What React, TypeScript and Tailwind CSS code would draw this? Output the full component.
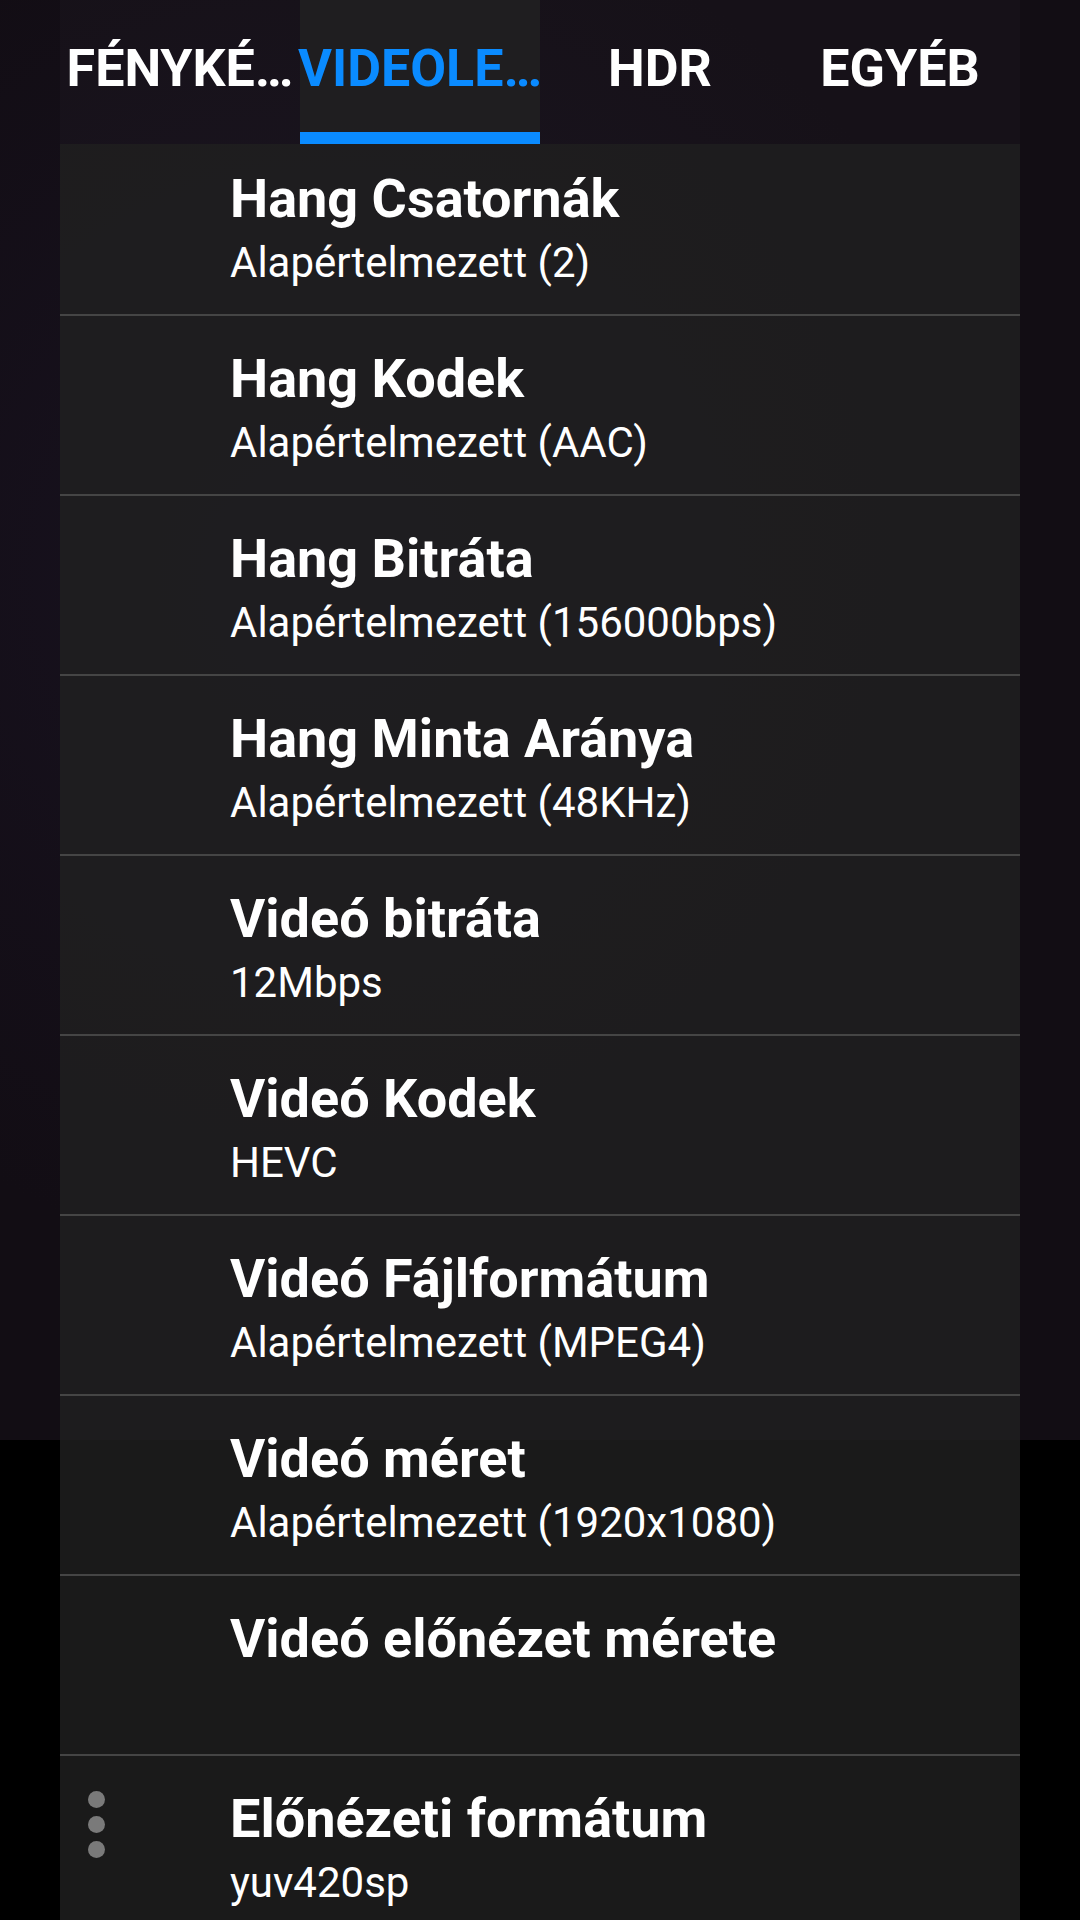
import React from "react";

const tabs = [
  { label: "FÉNYKÉ…", active: false },
  { label: "VIDEOLE…", active: true },
  { label: "HDR", active: false },
  { label: "EGYÉB", active: false },
];

const rows = [
  { title: "Hang Csatornák", value: "Alapértelmezett (2)" },
  { title: "Hang Kodek", value: "Alapértelmezett (AAC)" },
  { title: "Hang Bitráta", value: "Alapértelmezett (156000bps)" },
  { title: "Hang Minta Aránya", value: "Alapértelmezett (48KHz)" },
  { title: "Videó bitráta", value: "12Mbps" },
  { title: "Videó Kodek", value: "HEVC" },
  { title: "Videó Fájlformátum", value: "Alapértelmezett (MPEG4)" },
  { title: "Videó méret", value: "Alapértelmezett (1920x1080)" },
  { title: "Videó előnézet mérete", value: "" },
  { title: "Előnézeti formátum", value: "yuv420sp" },
];

export default function App() {
  return (
    <div className="relative w-[1080px] h-[1920px] overflow-hidden bg-black font-['Roboto',sans-serif] text-white">
      {/* camera preview behind the settings overlay */}
      <div className="absolute inset-x-0 top-0 h-[1440px] bg-[#120d14] bg-[radial-gradient(circle_at_30%_40%,#181220_0%,#120d14_60%)]" />

      <div className="relative mx-[60px] flex flex-col">
        <div className="flex h-[144px] bg-white/[0.02]">
          {tabs.map((tab) => (
            <div
              key={tab.label}
              className={`flex w-[240px] flex-col ${tab.active ? "bg-[rgba(34,34,34,0.8)]" : ""}`}
            >
              <div className="flex flex-1 items-center justify-center pt-[6px]">
                <span
                  className={`text-[52px] font-bold leading-[60px] whitespace-nowrap ${
                    tab.active ? "text-[#0a8bff]" : "text-white"
                  }`}
                >
                  {tab.label}
                </span>
              </div>
              <div className={`h-[12px] ${tab.active ? "bg-[#0a8bff]" : ""}`} />
            </div>
          ))}
        </div>

        <div className="overflow-hidden">
          <div className="-mt-[8px] flex flex-col">
            {rows.map((row) => (
              <div
                key={row.title}
                className="h-[180px] border-b-2 border-[#454545] bg-[rgba(33,33,33,0.8)] pl-[170px] pt-[31px]"
              >
                <div className="text-[54px] font-bold leading-[64px] whitespace-nowrap">{row.title}</div>
                <div className="mt-[7px] h-[50px] text-[42px] leading-[50px] whitespace-nowrap">{row.value}</div>
              </div>
            ))}
          </div>
        </div>
      </div>

      {/* floating overflow menu button */}
      <div className="absolute left-[88px] top-[1791px] flex flex-col gap-[8px]">
        <div className="h-[17px] w-[17px] rounded-full bg-[#7a7a7a]" />
        <div className="h-[17px] w-[17px] rounded-full bg-[#7a7a7a]" />
        <div className="h-[17px] w-[17px] rounded-full bg-[#7a7a7a]" />
      </div>
    </div>
  );
}
